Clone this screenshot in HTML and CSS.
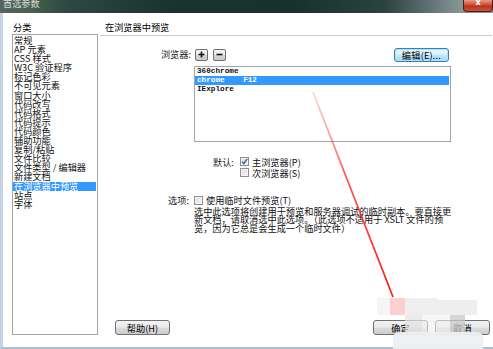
FILE: index.html
```html
<!DOCTYPE html>
<html lang="zh-CN">
<head>
<meta charset="utf-8">
<title>首选参数</title>
<link rel="stylesheet" href="styles.css">
</head>
<body>
<div class="titlebar">
  <span class="title">首选参数</span>
  <span class="close">x</span>
</div>
<div class="window">
  <div class="sidebar">
    <div class="side-label">分类</div>
    <ul class="cat-list">
      <li>常规</li>
      <li>AP 元素</li>
      <li>CSS 样式</li>
      <li>W3C 验证程序</li>
      <li>标记色彩</li>
      <li>不可见元素</li>
      <li>窗口大小</li>
      <li>代码改写</li>
      <li>代码格式</li>
      <li>代码提示</li>
      <li>代码颜色</li>
      <li>辅助功能</li>
      <li>复制/粘贴</li>
      <li>文件比较</li>
      <li>文件类型 / 编辑器</li>
      <li>新建文档</li>
      <li class="sel">在浏览器中预览</li>
      <li>站点</li>
      <li>字体</li>
    </ul>
  </div>
  <div class="panel">
    <div class="panel-head">在浏览器中预览</div>
    <div class="form">
      <div class="lbl lbl-browser">浏览器:</div>
      <div class="browser-tools">
        <button class="sq plus"><svg viewBox="0 0 7 7" width="7" height="7"><path d="M3.5 0.5V6.5M0.5 3.5H6.5" stroke="#111" stroke-width="1.6"/></svg></button>
        <button class="sq minus"><svg viewBox="0 0 7 7" width="7" height="7"><path d="M0.5 3.5H6.5" stroke="#111" stroke-width="1.6"/></svg></button>
        <button class="btn edit">编辑(E)...</button>
      </div>
      <div class="spacer"></div>
      <ul class="browser-list">
        <li>360chrome</li>
        <li class="sel">chrome    F12</li>
        <li>IExplore</li>
      </ul>
      <div class="spacer"></div>
      <div class="defaults">
        <span class="def-label">默认:</span>
        <label class="check"><span class="box checked"><svg viewBox="0 0 7 7" width="7" height="7"><path d="M1 3.6L2.8 5.6L6.2 0.8" fill="none" stroke="#2a5fb0" stroke-width="1.4"/></svg></span>主浏览器(P)</label>
        <span></span>
        <label class="check"><span class="box"></span>次浏览器(S)</label>
      </div>
      <div class="lbl lbl-opt">选项:</div>
      <div class="options">
        <label class="check"><span class="box"></span>使用临时文件预览(T)</label>
        <p class="desc">选中此选项将创建用于预览和服务器调试的临时副本。要直接更<br>新文档，请取消选中此选项。（此选项不适用于 XSLT 文件的预<br>览，因为它总是会生成一个临时文件）</p>
      </div>
    </div>
    <div class="footer">
      <button class="btn help">帮助(H)</button>
      <button class="btn ok">确定</button>
      <button class="btn cancel">取消</button>
    </div>
  </div>
</div>
<div class="overlay">
  <svg class="arrow" width="493" height="349" viewBox="0 0 493 349">
    <defs>
      <linearGradient id="fade" x1="313" y1="92" x2="393" y2="297" gradientUnits="userSpaceOnUse">
        <stop offset="0" stop-color="#ff6060" stop-opacity="0.25"/>
        <stop offset="0.4" stop-color="#ff3030" stop-opacity="0.8"/>
        <stop offset="1" stop-color="#ff1a1a" stop-opacity="1"/>
      </linearGradient>
    </defs>
    <line x1="313" y1="92" x2="393" y2="297" stroke="url(#fade)" stroke-width="1.8"/>
  </svg>
  <div class="blk b1"></div>
  <div class="blk b2"></div>
  <div class="blk b3"></div>
  <div class="blk b4"></div>
  <div class="blk b5"></div>
  <div class="blk b6"></div>
  <div class="blk b7"></div>
  <div class="blk b8"></div>
</div>
</body>
</html>
```

FILE: styles.css
```css
* { box-sizing: border-box; }
html, body { margin: 0; padding: 0; }
body {
  width: 493px;
  height: 349px;
  overflow: hidden;
  background: #fff;
  font-family: "Noto Sans CJK SC", "Liberation Sans", sans-serif;
  font-size: 9.2px;
  color: #000;
  position: relative;
}
ul { list-style: none; margin: 0; padding: 0; }
p { margin: 0; }
button { font-family: inherit; font-size: 9.2px; color: #000; padding: 0; cursor: default; }

.titlebar {
  height: 13px;
  display: flex;
  align-items: flex-start;
  overflow: hidden;
  background: linear-gradient(90deg, #56665f 0%, #48604f 6%, #2d4741 14%, #1b322d 35%, #1a302c 60%, #2b423e 78%, #66777a 88%, #8b9898 94%, #8a9694 100%);
}
.title {
  display: block;
  margin-top: -3px;
  padding-left: 3px;
  line-height: 12px;
  color: #d8dcd8;
}
.close {
  margin-left: auto;
  width: 30px;
  height: 12px;
  border: 1px solid #4a1c14;
  border-top: none;
  border-radius: 0 0 4px 4px;
  background: linear-gradient(#e89a86, #cf4a33 45%, #b8311f 55%, #c45640);
  color: #fff;
  font-family: "DejaVu Sans", sans-serif;
  font-weight: bold;
  font-size: 8px;
  line-height: 5px;
  text-align: center;
}

.window {
  height: 336px;
  display: flex;
  border-left: 3px solid #c3d4e4;
  border-bottom: 2px solid #aebfd0;
}

.sidebar {
  margin-left: 9px;
  width: 86px;
  display: flex;
  flex-direction: column;
}
.side-label {
  height: 21px;
  padding: 8px 0 0 1px;
  line-height: 12px;
}
.cat-list {
  height: 301px;
  border: 1px solid #a5a5a5;
  padding-top: 1px;
}
.cat-list li {
  line-height: 9.1px;
  height: 9.1px;
  padding-left: 1px;
  margin-right: 1px;
  white-space: nowrap;
  overflow: hidden;
  color: #111;
}
.cat-list li.sel { background: #3399ff; color: #fff; }

.panel {
  flex: 1;
  margin-left: 2px;
  margin-right: 1px;
  display: flex;
  flex-direction: column;
}
.panel-head {
  height: 23px;
  padding: 8px 0 0 5px;
  line-height: 12px;
  border-bottom: 1px solid #c9c9c9;
}

.form {
  display: grid;
  grid-template-columns: 94px 257px;
  align-items: start;
}
.lbl { text-align: right; white-space: nowrap; color: #222; }
.lbl-browser {
  margin-top: 12px;
  padding-right: 3px;
  line-height: 13px;
}
.browser-tools {
  margin-top: 11px;
  height: 15px;
  display: flex;
  align-items: center;
}
.sq {
  width: 13px;
  height: 12px;
  margin-left: 1px;
  border: 1px solid #6f6f6f;
  border-radius: 2px;
  background: linear-gradient(#f6f6f6, #e9e9e9 50%, #d8d8d8 51%, #cacaca);
  display: flex;
  align-items: center;
  justify-content: center;
}
.sq.minus { margin-left: 5px; }
.btn {
  width: 55px;
  height: 15px;
  border: 1px solid #707070;
  border-radius: 3px;
  background: linear-gradient(#f3f3f3, #ebebeb 48%, #dcdcdc 52%, #cdcdcd);
  line-height: 12px;
  text-align: center;
  white-space: nowrap;
}
.btn.edit {
  margin-left: auto;
  margin-right: 2px;
  height: 14px;
  border-color: #3c7fb1;
  box-shadow: inset 0 0 0 1px #a8e2fb;
  background: linear-gradient(#eaf6fd, #d9f0fc 48%, #bee6fd 52%, #a7d9f5);
  letter-spacing: 0.2px;
}

.browser-list {
  margin-top: 4px;
  height: 76px;
  border: 1px solid #a5a5a5;
}
.browser-list li {
  height: 9px;
  line-height: 9px;
  padding-left: 2px;
  margin-right: 1px;
  white-space: pre;
  font-family: "Liberation Mono", "DejaVu Sans Mono", monospace;
  font-size: 7.7px;
  font-weight: bold;
  color: #111;
}
.browser-list li.sel { background: #3399ff; color: #fff; }

.defaults {
  margin-top: 14px;
  padding-left: 19px;
  display: grid;
  grid-template-columns: 27px auto;
  grid-auto-rows: 11px;
  align-items: center;
}
.def-label { color: #222; white-space: nowrap; }
.check {
  display: flex;
  align-items: center;
  white-space: nowrap;
  color: #111;
}
.box {
  width: 9px;
  height: 9px;
  margin-right: 3px;
  border: 1px solid #8f8f8f;
  background: linear-gradient(135deg, #dcdcdc, #f6f6f6);
  box-shadow: inset 0 0 0 1px #f4f4f4;
  display: flex;
  align-items: center;
  justify-content: center;
  flex: none;
}
.lbl-opt {
  margin-top: 17px;
  padding-right: 5px;
  line-height: 10px;
}
.options { margin-top: 17px; }
.options .check { height: 10px; }
.desc {
  margin-top: 1.5px;
  line-height: 8.7px;
  white-space: nowrap;
  color: #111;
}

.footer {
  margin-top: auto;
  margin-bottom: 12px;
  display: flex;
}
.btn.help { margin-left: 15px; }
.btn.ok { margin-left: auto; }
.btn.cancel { margin-left: 7px; margin-right: 2px; }

.overlay {
  position: absolute;
  left: 0;
  top: 0;
  width: 493px;
  height: 349px;
  pointer-events: none;
}
.arrow { position: absolute; left: 0; top: 0; }
.blk { position: absolute; }
.b1 { left: 377px; top: 298px; width: 13px; height: 17px; background: rgba(244,244,244,0.95); }
.b2 { left: 390px; top: 298px; width: 15px; height: 17px; background: rgba(250,205,205,0.95); }
.b3 { left: 405px; top: 298px; width: 32px; height: 17px; background: rgba(238,238,238,0.95); }
.b4 { left: 437px; top: 300px; width: 40px; height: 15px; background: rgba(236,236,236,0.9); }
.b5 { left: 405px; top: 315px; width: 17px; height: 17px; background: rgba(226,226,226,0.7); }
.b6 { left: 450px; top: 315px; width: 15px; height: 17px; background: rgba(200,200,200,0.75); }
.b7 { left: 422px; top: 315px; width: 28px; height: 17px; background: rgba(240,240,240,0.6); }
.b8 { left: 393px; top: 332px; width: 90px; height: 17px; background: rgba(236,240,243,0.95); border-radius: 6px 6px 0 0; }
```
